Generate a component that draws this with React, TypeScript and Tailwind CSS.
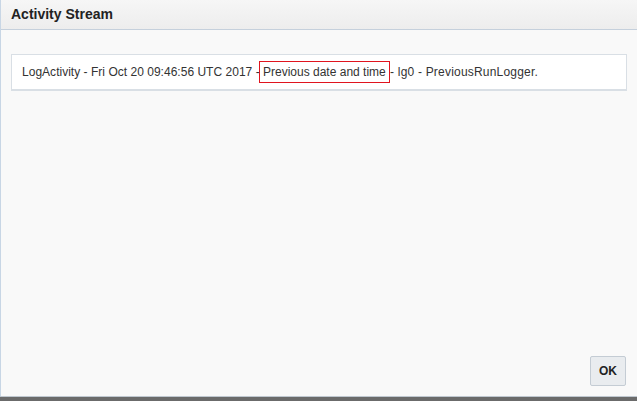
export default function App() {
  return (
    <div
      className="flex h-[401px] w-[637px] flex-col overflow-hidden bg-[#f9f9f9] text-[#333]"
      style={{ fontFamily: '"Liberation Sans", Arial, sans-serif' }}
    >
      <div className="flex flex-1 flex-col border-l border-[#c8d6e5]">
        {/* Header */}
        <div className="flex h-[30px] items-center border-b border-[#c5d0dc] bg-gradient-to-b from-[#f6f6f6] to-[#ededed] pl-[10px]">
          <h1 className="text-[14px] font-bold text-[#222]">Activity Stream</h1>
        </div>

        {/* Body */}
        <div className="flex flex-1 flex-col px-[10px] pt-[24px]">
          <div className="flex h-[37px] items-center border border-b-2 border-[#d9dfe5] bg-white pl-[10px] text-[12px] text-[#333]">
            <span className="whitespace-pre tracking-[0.02px]">LogActivity - Fri Oct 20 09:46:56 UTC 2017 -</span>
            <span className="-ml-[1px] inline-block whitespace-pre border border-[#e0141e] py-[3px] leading-[14px]">
              {' Previous date and time '}
            </span>
            <span className="whitespace-pre tracking-[0.2px]">- lg0 - PreviousRunLogger.</span>
          </div>

          <div className="flex-1" />

          <div className="flex justify-end pb-[10px] pr-[1px]">
            <button className="h-[30px] w-[36px] rounded-[2px] border border-[#c4ccd4] bg-[#e9ecef] text-[12px] font-bold text-[#222]">
              OK
            </button>
          </div>
        </div>
      </div>
      <div className="h-px bg-[#c0c8d0]" />
      <div className="h-[4px] bg-[#6b6b6b]" />
    </div>
  );
}
